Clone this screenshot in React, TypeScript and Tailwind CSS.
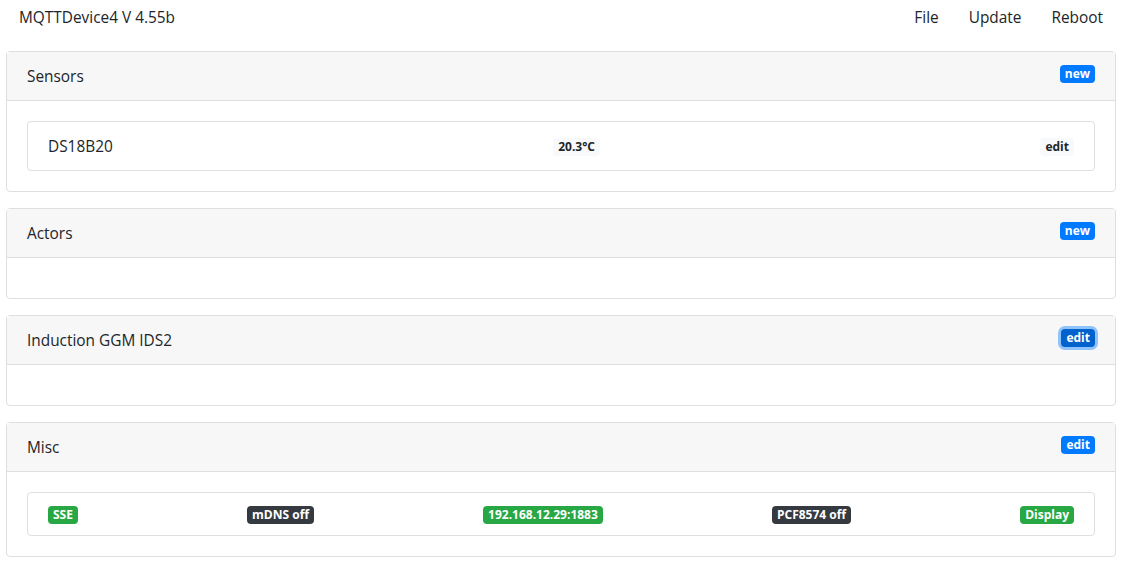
import React from "react";

type BadgeKind = "primary" | "light" | "success" | "dark" | "focus";

const badgeColors: Record<BadgeKind, string> = {
  primary: "bg-[#007bff] text-white",
  light: "bg-[#f8f9fa] text-[#212529]",
  success: "bg-[#28a745] text-white",
  dark: "bg-[#343a40] text-white",
  focus: "bg-[#0062cc] text-white shadow-[0_0_0_3px_rgba(38,143,255,0.5)]",
};

function Badge({ kind, children }: { kind: BadgeKind; children: React.ReactNode }) {
  return (
    <span
      className={`mt-px inline-block rounded-[4px] px-[5px] py-[3px] text-[12px] leading-[12px] font-bold whitespace-nowrap ${badgeColors[kind]}`}
    >
      {children}
    </span>
  );
}

function Card({
  title,
  action,
  actionKind = "primary",
  children,
}: {
  title: string;
  action: string;
  actionKind?: BadgeKind;
  children?: React.ReactNode;
}) {
  return (
    <section className="rounded-[4px] border border-[#dfdfdf] bg-white">
      <div className="flex items-start justify-between border-b border-[#dfdfdf] bg-[#f7f7f7] px-5 py-3">
        <h2 className="pt-px text-[15.4px] leading-[23px]">{title}</h2>
        <Badge kind={actionKind}>{action}</Badge>
      </div>
      <div className="p-5">{children}</div>
    </section>
  );
}

export default function App() {
  return (
    <div className="min-h-screen bg-white font-['Segoe_UI','Open_Sans',sans-serif] text-[#212529]">
      <nav className="flex h-[35px] items-center justify-between pr-6 pl-[19px]">
        <span className="text-[15.4px] leading-6">MQTTDevice4 V 4.55b</span>
        <ul className="flex gap-[30px] text-[15.4px] leading-6">
          <li>File</li>
          <li>Update</li>
          <li>Reboot</li>
        </ul>
      </nav>

      <main className="flex flex-col gap-4 pt-4 pr-[11px] pb-5 pl-[6px]">
        <Card title="Sensors" action="new">
          <div className="flex items-center justify-between rounded-[4px] border border-[#dfdfdf] px-5 py-3">
            <span className="pt-[2px] text-[15.4px] leading-[22px]">DS18B20</span>
            <Badge kind="light">20.3°C</Badge>
            <Badge kind="light">edit</Badge>
          </div>
        </Card>

        <Card title="Actors" action="new" />

        <Card title="Induction GGM IDS2" action="edit" actionKind="focus" />

        <Card title="Misc" action="edit">
          <div className="flex items-center justify-between rounded-[4px] border border-[#dfdfdf] px-5 pt-[12px] pb-[11px]">
            <Badge kind="success">SSE</Badge>
            <Badge kind="dark">mDNS off</Badge>
            <Badge kind="success">192.168.12.29:1883</Badge>
            <Badge kind="dark">PCF8574 off</Badge>
            <Badge kind="success">Display</Badge>
          </div>
        </Card>
      </main>
    </div>
  );
}
